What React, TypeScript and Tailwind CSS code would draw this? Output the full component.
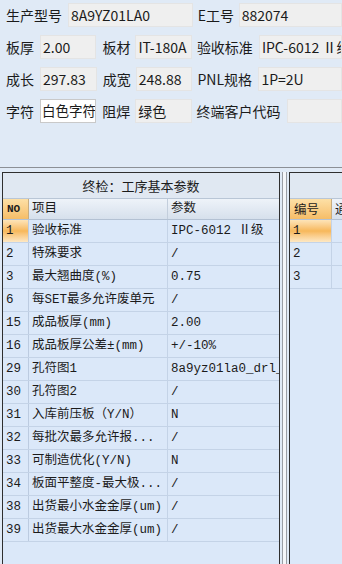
import React from 'react';

const formFont = "font-['Noto_Sans_CJK_SC',sans-serif]";
const gridFont = "font-['Liberation_Mono','Noto_Sans_CJK_SC',monospace]";

const Field: React.FC<{ value?: string; className?: string; white?: boolean }> = ({ value = '', className = '', white }) => (
  <div
    className={`h-6 flex items-center overflow-hidden whitespace-nowrap border ${
      white ? 'bg-white border-[#c9c9c9] pl-px' : 'bg-[#efefef] border-[#e4e4e4] pl-[2px]'
    } ${className}`}
  >
    {value}
  </div>
);

const Label: React.FC<{ text: string; className?: string }> = ({ text, className = '' }) => (
  <div className={`h-6 flex items-center whitespace-nowrap shrink-0 ${className}`}>{text}</div>
);

const rows: [string, string, string][] = [
  ['1', '验收标准', 'IPC-6012 Ⅱ级'],
  ['2', '特殊要求', '/'],
  ['3', '最大翘曲度(%)', '0.75'],
  ['6', '每SET最多允许废单元', '/'],
  ['15', '成品板厚(mm)', '2.00'],
  ['16', '成品板厚公差±(mm)', '+/-10%'],
  ['29', '孔符图1', '8a9yz01la0_drl_1'],
  ['30', '孔符图2', '/'],
  ['31', '入库前压板（Y/N）', 'N'],
  ['32', '每批次最多允许报...', '/'],
  ['33', '可制造优化(Y/N)', 'N'],
  ['34', '板面平整度-最大极...', '/'],
  ['38', '出货最小水金金厚(um)', '/'],
  ['39', '出货最大水金金厚(um)', '/'],
];

const selectedCell = 'bg-gradient-to-b from-[#fde4b8] via-[#f7b85a] to-[#fde8c4]';
const headerCell = 'bg-gradient-to-b from-[#eef3f9] to-[#d6e0ec]';

export default function App() {
  return (
    <div className="w-[342px] h-[564px] bg-[#e0eaf6] overflow-hidden text-[#1b1b1b]">
      {/* top form */}
      <div className={`${formFont} text-[14px] leading-none pt-[3px] flex flex-col gap-2`}>
        <div className="flex pl-[6px]">
          <Label text="生产型号" className="w-[62px]" />
          <Field value="8A9YZ01LA0" className="w-[133px]" />
          <Label text="E工号" className="w-[41px] ml-[5px]" />
          <Field value="882074" className="w-[110px]" />
        </div>
        <div className="flex pl-[6px]">
          <Label text="板厚" className="w-[34px]" />
          <Field value="2.00" className="w-[61px]" />
          <Label text="板材" className="w-[33px] ml-[6px]" />
          <Field value="IT-180A" className="w-[61px]" />
          <Label text="验收标准" className="w-[62px] ml-[5px]" />
          <Field value="IPC-6012 Ⅱ级" className="w-[90px]" />
        </div>
        <div className="flex pl-[6px]">
          <Label text="成长" className="w-[34px]" />
          <Field value="297.83" className="w-[61px]" />
          <Label text="成宽" className="w-[33px] ml-[6px]" />
          <Field value="248.88" className="w-[61px]" />
          <Label text="PNL规格" className="w-[61px] ml-[5px]" />
          <Field value="1P=2U" className="w-[90px]" />
        </div>
        <div className="flex pl-[6px]">
          <Label text="字符" className="w-[34px]" />
          <Field value="白色字符" className="w-[61px] text-[13.5px]" white />
          <Label text="阻焊" className="w-[33px] ml-[6px]" />
          <Field value="绿色" className="w-[61px]" />
          <Label text="终端客户代码" className="w-[90px] ml-[5px]" />
          <Field className="w-[60px]" />
        </div>
      </div>

      <div className="mt-[44px] h-px bg-[#8c9096]" />

      {/* grids */}
      <div className={`${gridFont} text-[12.5px] leading-none flex mt-[4px] h-[400px]`}>
        <div className="ml-[2px] w-[278px] shrink-0 border-l border-t border-r border-[#2f2f2f] bg-[#dbe8f9] flex flex-col">
          <div className={`h-[26px] flex items-center justify-center bg-[#e0e8f2] border-b border-[#b9c6d6] ${formFont} text-[13px]`}>
            终检：工序基本参数
          </div>
          <div className="flex h-[21px] border-b border-[#b3c1d3]">
            <div className="w-[26px] flex items-center pl-[4px] bg-gradient-to-b from-[#fde0a6] to-[#f6bd67] border-r border-[#c8ad80] text-[11px] font-bold">
              NO
            </div>
            <div className={`w-[139px] flex items-center pl-[3px] ${headerCell} border-r border-[#c3cedc]`}>项目</div>
            <div className={`flex-1 flex items-center pl-[3px] ${headerCell}`}>参数</div>
          </div>
          {rows.map(([no, item, val], i) => (
            <div key={no} className="flex h-[23px] border-b border-[#c4d3e7]">
              <div
                className={`w-[26px] flex items-center pl-[3px] border-r border-[#bccbe0] ${i === 0 ? selectedCell : ''}`}
              >
                {no}
              </div>
              <div className="w-[139px] flex items-center pl-[3px] border-r border-[#c4d3e7] whitespace-nowrap overflow-hidden">
                {item}
              </div>
              <div className="flex-1 flex items-center pl-[3px] whitespace-nowrap overflow-hidden">{val}</div>
            </div>
          ))}
        </div>

        {/* splitter */}
        <div className="w-[9px] shrink-0 flex">
          <div className="w-[2px]" />
          <div className="w-px bg-[#9a9ea4]" />
          <div className="w-[3px] bg-[#f4f6f9]" />
          <div className="w-px bg-[#9a9ea4]" />
        </div>

        <div className="flex-1 border-l border-t border-[#2f2f2f] bg-[#dbe8f9] flex flex-col">
          <div className="h-[26px] bg-[#e0e8f2] border-b border-[#b9c6d6]" />
          <div className="flex h-[21px] border-b border-[#b3c1d3]">
            <div className={`w-[42px] flex items-center pl-[4px] bg-gradient-to-b from-[#fde0a6] to-[#f6bd67] border-r border-[#c8ad80] ${formFont}`}>
              编号
            </div>
            <div className={`flex-1 flex items-center pl-[3px] ${headerCell} ${formFont} whitespace-nowrap overflow-hidden`}>
              通用
            </div>
          </div>
          {['1', '2', '3'].map((n, i) => (
            <div key={n} className="flex h-[23px] border-b border-[#c4d3e7]">
              <div className={`w-[42px] flex items-center pl-[3px] border-r border-[#c4d3e7] ${i === 0 ? selectedCell : ''}`}>
                {n}
              </div>
              <div className="flex-1" />
            </div>
          ))}
        </div>
      </div>
    </div>
  );
}
